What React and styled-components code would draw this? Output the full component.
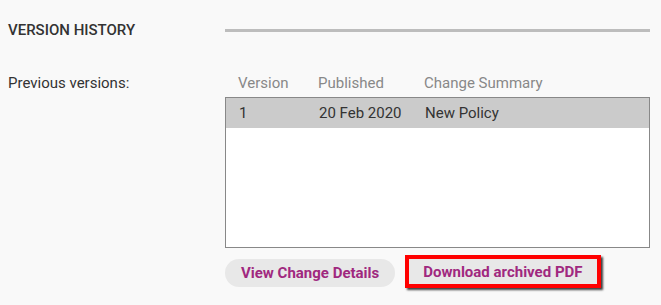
import React from "react";
import styled, { createGlobalStyle } from "styled-components";

const GlobalStyle = createGlobalStyle`
  html, body {
    margin: 0;
    padding: 0;
    background: #f9f9f9;
    font-family: Roboto, "Liberation Sans", sans-serif;
  }
`;

const Page = styled.div`
  width: 661px;
  height: 305px;
  box-sizing: border-box;
  padding: 20px 11px 0 8px;
  display: grid;
  grid-template-columns: 217px 1fr;
  grid-template-rows: 20px auto;
  row-gap: 32px;
`;

const SectionTitle = styled.h2`
  margin: 0;
  font-size: 15px;
  font-weight: 500;
  color: #333;
  line-height: 20px;
`;

const Rule = styled.div`
  display: flex;
  align-items: center;
  &::after {
    content: "";
    flex: 1;
    height: 3px;
    background: #bdbdbd;
  }
`;

const Label = styled.div`
  font-size: 15px;
  color: #333;
  line-height: 20px;
  padding-top: 1px;
`;

const Columns = styled.div`
  display: grid;
  grid-template-columns: 80px 106px 1fr;
  padding-left: 13px;
  font-size: 15px;
  line-height: 20px;
`;

const HeadCell = styled.div`
  color: #888;
  padding-top: 1px;
  padding-bottom: 4px;
`;

const ListBox = styled.div`
  height: 151px;
  border: 1px solid #888;
  background: #fff;
  box-sizing: border-box;
`;

const Row = styled(Columns)`
  height: 30px;
  align-items: center;
  padding-left: 13px;
  background: ${(p) => (p.$selected ? "#cbcbcb" : "transparent")};
  color: #333;
`;

const Buttons = styled.div`
  display: flex;
  align-items: flex-start;
  gap: 10px;
  margin-top: 11px;
`;

const Button = styled.button`
  height: ${(p) => (p.$square ? "25px" : "28px")};
  padding: 0 ${(p) => (p.$square ? "14px" : "16px")};
  border: none;
  border-radius: ${(p) => (p.$square ? "0" : "14px")};
  background: #e8e8e8;
  color: #a0287f;
  font-family: inherit;
  font-size: 15px;
  font-weight: 700;
  cursor: pointer;
`;

const Highlight = styled.div`
  margin-top: -4px;
  border: 4px solid #ff0000;
  box-shadow: 2px 2px 2px rgba(0, 0, 0, 0.75);
  display: flex;
`;

export default function App() {
  return (
    <>
      <GlobalStyle />
      <Page>
        <SectionTitle>VERSION HISTORY</SectionTitle>
        <Rule />
        <Label>Previous versions:</Label>
        <div>
          <Columns>
            <HeadCell>Version</HeadCell>
            <HeadCell>Published</HeadCell>
            <HeadCell>Change Summary</HeadCell>
          </Columns>
          <ListBox>
            <Row $selected>
              <div>1</div>
              <div>20 Feb 2020</div>
              <div>New Policy</div>
            </Row>
          </ListBox>
          <Buttons>
            <Button>View Change Details</Button>
            <Highlight>
              <Button $square>Download archived PDF</Button>
            </Highlight>
          </Buttons>
        </div>
      </Page>
    </>
  );
}
